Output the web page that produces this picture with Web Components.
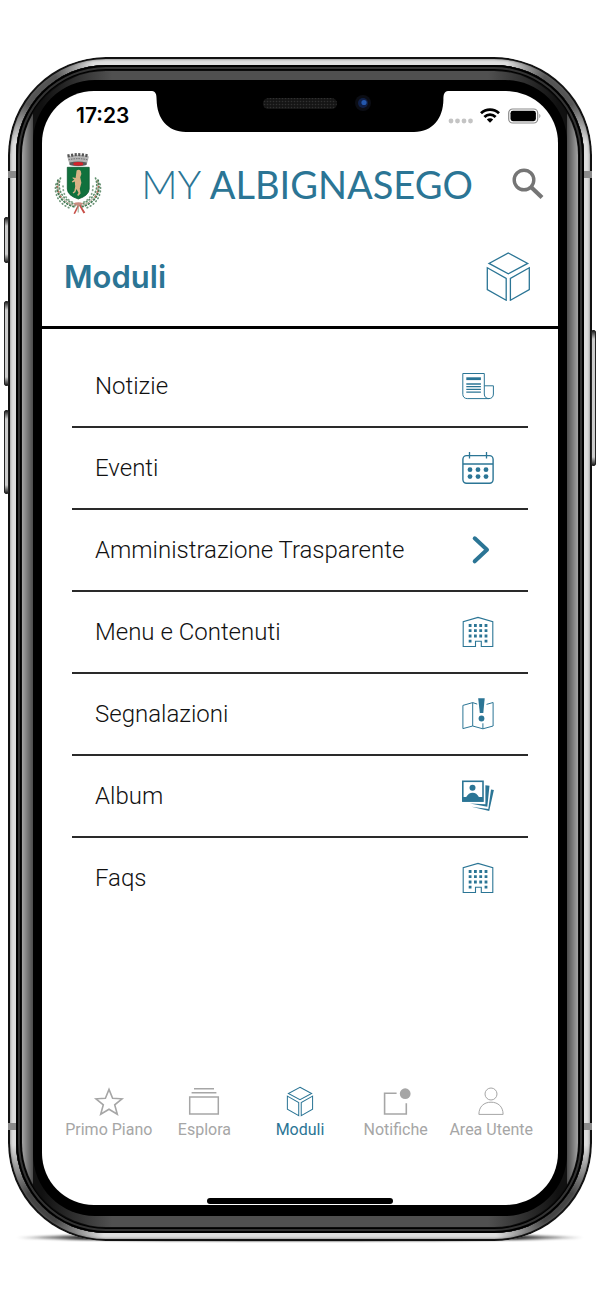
<!DOCTYPE html>
<html lang="it">
<head>
    <meta charset="utf-8">
    <meta name="viewport" content="width=device-width, initial-scale=1">
    <title>My Albignasego</title>
    <style>
        body {
            margin: 0;
            background: #fff;
            color: #111;
            font-family: Roboto, "Noto Sans", sans-serif;
            --brand: #2b7595;
            --muted: #a6a6a6;
        }
    </style>
</head>
<body>
    <phone-frame>
        <status-bar slot="status" time="17:23"></status-bar>
        <app-header></app-header>
        <page-title icon="cube">Moduli</page-title>
        <module-list>
            <module-item icon="news">Notizie</module-item>
            <module-item icon="calendar">Eventi</module-item>
            <module-item icon="chevron">Amministrazione Trasparente</module-item>
            <module-item icon="building">Menu e Contenuti</module-item>
            <module-item icon="map">Segnalazioni</module-item>
            <module-item icon="album">Album</module-item>
            <module-item icon="building">Faqs</module-item>
        </module-list>
        <tab-bar>
            <tab-item icon="star">Primo Piano</tab-item>
            <tab-item icon="stack">Esplora</tab-item>
            <tab-item icon="smallcube" active>Moduli</tab-item>
            <tab-item icon="notify">Notifiche</tab-item>
            <tab-item icon="user">Area Utente</tab-item>
        </tab-bar>
    </phone-frame>

    <script>
        const CUBE = `
            <path d="M22.3 1 41.7 11.4 22.3 21.8 3 11.4z"/>
            <path d="M1.3 15.8 20.2 26.5V48.2L1.3 37.5z"/>
            <path d="M43.3 15.8 24.4 26.5V48.2L43.3 37.5z"/>`;

        const ICONS = {
            cube: { box: "0 0 44 49", body: `<g stroke-width="1.3">${CUBE}</g>` },
            smallcube: { box: "0 0 32 32", body: `<g transform="translate(2.6 .7) scale(.6)" stroke-width="1.7">${CUBE}</g>` },
            news: {
                box: "0 0 32 32",
                body: `
                    <path d="M27 28.6H5.2C2.6 28.6.8 26.8.8 24.3V3.5h21.5V24c0 3 2 4.6 4.6 4.6s4.5-1.6 4.5-4.6v-8.2h-9.1"/>
                    <path d="M4.3 8.7h14.6" stroke-width="2.8"/>
                    <path d="M4.3 14h14.6M4.3 16.7h14.6M4.3 19.4h14.6M4.3 22.2h14.6" stroke-width="1.3"/>`
            },
            calendar: {
                box: "0 0 32 32",
                body: `
                    <rect x=".9" y="3.6" width="30.2" height="27.6" rx="3.6" stroke-width="1.4"/>
                    <path d="M1 12h30M7.5 0v6.5M24.5 0v6.5" stroke-width="1.3"/>
                    <g fill="currentColor" stroke="none">
                        <circle cx="8" cy="17.7" r="2.4"/><circle cx="16" cy="17.7" r="2.4"/><circle cx="24" cy="17.7" r="2.4"/>
                        <circle cx="8" cy="24.6" r="2.4"/><circle cx="16" cy="24.6" r="2.4"/><circle cx="24" cy="24.6" r="2.4"/>
                    </g>`
            },
            chevron: {
                box: "0 0 32 32",
                body: `<path d="M12.7 4.3 25 15.8 12.7 27.3" stroke-width="4" stroke-linecap="round" stroke-linejoin="round"/>`
            },
            building: {
                box: "0 0 32 32",
                body: `
                    <path d="M1.2 30.5V5.6L16 1.4l14.8 4.2v24.9H19.3v-5.2h-5.8v5.2z" stroke-width="1.1"/>
                    <path d="M6.7 9.5h19M6.7 14.6h19M6.7 20h19" stroke-width="2.8" stroke-dasharray="2.8 2.5"/>
                    <path d="M6.7 25.2h2.8M22.6 25.2h2.8" stroke-width="2.8"/>`
            },
            map: {
                box: "0 0 32 32",
                body: `
                    <path d="M15.2 6.1 10.7 4.6.9 7.4v23.2L10.7 28l10.2 2.8 10.2-2.8V4.5l-6.6 1.9M10.7 4.6V28M20.9 30.8v-5.5"/>
                    <path d="M16.2.2h6.5L21.3 15h-3.5z" fill="currentColor" stroke="none"/>
                    <circle cx="19.5" cy="20.5" r="2.9" fill="currentColor" stroke="none"/>`
            },
            album: {
                box: "0 0 32 32",
                body: `
                    <rect x=".8" y="1.3" width="20.2" height="19.8" stroke-width="1.6"/>
                    <g fill="currentColor" stroke="none">
                        <circle cx="10.5" cy="7.8" r="3"/>
                        <path d="M1 21.5V17h3.2c1.6-2.8 3.7-4.3 6.4-4.3s4.8 1.5 6.3 4.3H21v4.5z"/>
                        <path d="M23.4 5.3 27.5 5.7 25.3 26.8 8 23.5 23.4 24.2z"/>
                        <path d="M29 9.5 31.9 10.1 27.2 31 9.5 26.8 26.3 29z"/>
                    </g>`
            },
            star: {
                box: "0 0 32 32",
                body: `<path d="M16 3.4 19.6 12.2 29 12.8 21.7 18.8 24.3 28.2 16 23.2 7.7 28.2 10.3 18.8 3 12.8 12.4 12.2z" stroke-width="1.6"/>`
            },
            stack: {
                box: "0 0 32 32",
                body: `
                    <path d="M6 2.8h20M3.6 6.8h24.8" stroke-width="1.5"/>
                    <rect x="1.7" y="11" width="28.6" height="17" stroke-width="1.5"/>`
            },
            notify: {
                box: "0 0 32 32",
                body: `
                    <path d="M16.6 7.3H4.6V28h21.7V17.3" stroke-width="1.6"/>
                    <circle cx="25.2" cy="7.7" r="5.4" fill="currentColor" stroke="none"/>`
            },
            user: {
                box: "0 0 32 32",
                body: `
                    <circle cx="16" cy="8" r="6"/>
                    <path d="M3.9 28.4c0-7.8 5-12.2 12.1-12.2s12.1 4.4 12.1 12.2z"/>`
            },
            search: {
                box: "0 0 32 32",
                body: `
                    <circle cx="12" cy="12" r="9.8" stroke-width="3.4"/>
                    <path d="M19 19l11 10.5" stroke-width="4.2"/>`
            }
        };

        class AppIcon extends HTMLElement {
            constructor() {
                super();
                this.attachShadow({ mode: "open" });
            }

            connectedCallback() {
                const icon = ICONS[this.getAttribute("name")];

                this.shadowRoot.innerHTML = `
                    <style>
                        :host {
                            display: block;
                            flex: none;
                            width: 32px;
                            height: 32px;
                        }

                        svg {
                            display: block;
                            width: 100%;
                            height: 100%;
                        }
                    </style>
                    <svg viewBox="${icon.box}" fill="none" stroke="currentColor" aria-hidden="true">${icon.body}</svg>
                `;
            }
        }
        customElements.define("app-icon", AppIcon);

        class PhoneFrame extends HTMLElement {
            constructor() {
                super();
                this.attachShadow({ mode: "open" });

                this.shadowRoot.innerHTML = `
                    <style>
                        :host {
                            box-sizing: border-box;
                            display: flex;
                            min-height: 100vh;
                            padding: 57px 8px 59px;
                        }

                        .steel, .rim, .glass, .bezel, .screen {
                            box-sizing: border-box;
                            display: flex;
                            flex-direction: column;
                            flex: 1;
                            min-width: 0;
                        }

                        .steel {
                            position: relative;
                            padding: 8px;
                            border-radius: 98px;
                            background:
                                radial-gradient(circle at 30px 30px, #555 20px, transparent 60px),
                                radial-gradient(circle at calc(100% - 30px) 30px, #555 20px, transparent 60px),
                                radial-gradient(circle at 30px calc(100% - 30px), #444 20px, transparent 70px),
                                radial-gradient(circle at calc(100% - 30px) calc(100% - 30px), #444 20px, transparent 70px),
                                #dedede;
                            box-shadow: inset 0 0 0 2px #111, inset 0 0 3px 2px #666;
                        }

                        .steel::before {
                            content: "";
                            position: absolute;
                            z-index: -1;
                            right: 8px;
                            bottom: 0;
                            left: 8px;
                            height: 7px;
                            border-radius: 50%;
                            background: linear-gradient(90deg, transparent, #222 12%, #222 88%, transparent);
                            filter: blur(1px);
                        }

                        .rim {
                            padding: 6px;
                            border-radius: 90px;
                            background: #0c0c0c;
                            box-shadow: inset 0 0 0 2px #000, inset 0 0 0 4px #333, inset 0 0 0 5px #000;
                        }

                        .glass {
                            padding: 9px 11px 11px;
                            border-radius: 84px;
                            background:
                                linear-gradient(90deg, #a4a4a4, #4c4c4c 11px, transparent 11px, transparent calc(100% - 11px), #4c4c4c calc(100% - 11px), #a4a4a4),
                                linear-gradient(90deg, #111 20px, #505050 90px, #505050 calc(100% - 90px), #111 calc(100% - 20px));
                        }

                        .bezel {
                            padding: 11px 9px;
                            border-radius: 62px;
                            background: #000;
                        }

                        .screen {
                            position: relative;
                            overflow: hidden;
                            border-radius: 52px;
                            background: #fff;
                        }

                        .notch {
                            position: absolute;
                            top: 0;
                            left: 50%;
                            width: 296px;
                            height: 41px;
                            transform: translateX(-50%);
                        }

                        .home {
                            flex: none;
                            width: 36%;
                            height: 6px;
                            margin: 0 auto 1px;
                            border-radius: 3px;
                            background: #000;
                        }

                        .key {
                            position: absolute;
                            width: 5px;
                            border: 1px solid #222;
                            box-sizing: border-box;
                            border-radius: 2px;
                            background: linear-gradient(#222, #ccc 8px, #ccc calc(100% - 8px), #222);
                        }

                        .key--mute { top: 160px; left: -4px; height: 46px; }
                        .key--up { top: 244px; left: -4px; height: 85px; }
                        .key--down { top: 353px; left: -4px; height: 84px; }
                        .key--power { top: 273px; right: -4px; height: 136px; }

                        .band {
                            position: absolute;
                            width: 8px;
                            height: 7px;
                            background: #8a8a8a;
                        }

                        .band--tl { top: 114px; left: 0; }
                        .band--tr { top: 114px; right: 0; }
                        .band--bl { bottom: 111px; left: 0; }
                        .band--br { bottom: 111px; right: 0; }
                    </style>

                    <div class="steel">
                        <span class="key key--mute"></span>
                        <span class="key key--up"></span>
                        <span class="key key--down"></span>
                        <span class="key key--power"></span>
                        <span class="band band--tl"></span>
                        <span class="band band--tr"></span>
                        <span class="band band--bl"></span>
                        <span class="band band--br"></span>
                        <div class="rim">
                            <div class="glass">
                                <div class="bezel">
                                    <div class="screen">
                                        <slot name="status"></slot>
                                        <slot></slot>
                                        <div class="home"></div>
                                        <svg class="notch" viewBox="0 0 296 41" aria-hidden="true">
                                            <defs>
                                                <pattern id="mesh" width="3" height="3" patternUnits="userSpaceOnUse">
                                                    <rect width="3" height="3" fill="#151515"/>
                                                    <circle cx="1.5" cy="1.5" r=".8" fill="#303030"/>
                                                </pattern>
                                            </defs>
                                            <path d="M0 0C3.6.4 4.6 3 4.6 9 5 27 15 41 34 41H262C281 41 291 27 291.4 9 291.4 3 292.4.4 296 0z"/>
                                            <rect x="111" y="7" width="74" height="11" rx="5.5" fill="url(#mesh)"/>
                                            <circle cx="211" cy="12" r="8" fill="#0b0d14"/>
                                            <circle cx="211" cy="12" r="5" fill="#102048"/>
                                            <circle cx="212" cy="11.5" r="2.6" fill="#2458ae"/>
                                        </svg>
                                    </div>
                                </div>
                            </div>
                        </div>
                    </div>
                `;
            }
        }
        customElements.define("phone-frame", PhoneFrame);

        class StatusBar extends HTMLElement {
            constructor() {
                super();
                this.attachShadow({ mode: "open" });
            }

            connectedCallback() {
                this.shadowRoot.innerHTML = `
                    <style>
                        :host {
                            display: flex;
                            align-items: center;
                            justify-content: space-between;
                            height: 50px;
                            padding: 0 16px 0 34px;
                            color: #000;
                            font: 600 21px/24px Inter, sans-serif;
                        }

                        svg {
                            display: block;
                        }
                    </style>
                    <time>${this.getAttribute("time")}</time>
                    <svg width="94" height="18" viewBox="0 0 94 18" role="img" aria-label="Wi-Fi, batteria carica">
                        <g fill="#c4c4c4">
                            <circle cx="3" cy="14" r="2.4"/><circle cx="9.5" cy="14" r="2.4"/>
                            <circle cx="16" cy="14" r="2.4"/><circle cx="22.5" cy="14" r="2.4"/>
                        </g>
                        <g fill="none" stroke="#000" stroke-width="2.8">
                            <path d="M33 6.3a13 13 0 0 1 18 0"/>
                            <path d="M36.4 10a8 8 0 0 1 11.2 0"/>
                        </g>
                        <path d="M42 15.8l-3.2-3.3a4.6 4.6 0 0 1 6.4 0z"/>
                        <rect x="60.7" y="2" width="29" height="14" rx="4" fill="none" stroke="#8a8a8a" stroke-width="1.2"/>
                        <rect x="62.5" y="3.8" width="25.4" height="10.4" rx="2.4"/>
                        <path d="M91.4 6.8q2 2.2 0 4.4z" fill="#8a8a8a"/>
                    </svg>
                `;
            }
        }
        customElements.define("status-bar", StatusBar);

        class TownCrest extends HTMLElement {
            constructor() {
                super();
                this.attachShadow({ mode: "open" });

                this.shadowRoot.innerHTML = `
                    <style>
                        :host {
                            display: block;
                            flex: none;
                            width: 48px;
                            height: 62px;
                        }

                        svg {
                            display: block;
                        }
                    </style>
                    <svg width="48" height="62" viewBox="0 0 48 62" role="img" aria-label="Stemma">
                        <path d="M13.3 3.5Q24 0 35 3.5L32.6 12Q24 14.5 15.6 12z" fill="#b5b5b5"/>
                        <path d="M13.5 3Q24 .2 34.800 3" fill="none" stroke="#555" stroke-width="3" stroke-dasharray="2.2 1.4"/>
                        <path d="M14.5 6.8Q24 4.5 33.8 6.8" fill="none" stroke="#666" stroke-dasharray="1.5 1"/>
                        <path d="M15.6 9.5Q24 7.5 32.8 9.5L32.4 12Q24 14 15.8 12z" fill="#5b5b5b"/>
                        <path d="M19.5 9.8Q24 8.4 29 9.8V12Q24 13 19.5 12z" fill="#d3222a"/>
                        <g fill="none" stroke-linecap="round" stroke-width="1.7">
                            <path d="M6.5 25C2 38 10 48 23 52M41.500 25C46 38 38 48 25 52" stroke="#5e8f6b" stroke-dasharray=".8 2.6"/>
                            <path d="M4 27C0 40 8 51 21 54M44 27C48 40 40 51 27 54" stroke="#3f7a52" stroke-dasharray="1 2.4"/>
                            <path d="M2 31C-.5 42 6 52 17 55.500M46 31C48.500 42 42 52 31 55.500" stroke="#6d9578" stroke-dasharray=".6 3"/>
                            <path d="M9 33C9 42 13 47 20 50M39 33C39 42 35 47 28 50" stroke="#86a58c" stroke-dasharray=".6 3.2"/>
                        </g>
                        <g fill="none">
                            <path d="M5 27C1 39 9 50 22 53M43 27C47 39 39 50 26 53" stroke="#83765c" stroke-width=".8"/>
                            <path d="M3.500 33q0 8 6 14M44.500 33q0 8-6 14" stroke="#c0604f" stroke-width="1.4" stroke-dasharray="1.3 4"/>
                        </g>
                        <path d="M13.3 14.3H35.2V36Q35 42.5 24.3 46 13.5 42.5 13.3 36z" fill="#11713d" stroke="#0b5930" stroke-width=".8"/>
                        <path d="M22.6 17.500q2.400-1.500 4.200.5l.6 3-1.200 3.300 1.200 5.400-1.600 6 .8 4.700-2.400 2.600-1-.9 1.300-2.300-2-3.700-1.200 3.200-2.200 1.200-.4-1.100 1.600-1.400.9-4.500-.4-5-2.300 1-.7-1 2.600-2-1.700-1-.1-1.300 3 .8z" fill="#d8b286"/>
                        <path d="M19 50.500q5.300-2.500 10.500 0l-5 2.700z" fill="#c98a7f"/>
                        <path d="M23.5 52.500l-4 8 1.500.5 4-8M25 52.500l4.500 8 1.800-1-4.800-7.500" fill="#c84f48"/>
                        <path d="M24.2 52.500v7" stroke="#8fae97" stroke-width="1"/>
                    </svg>
                `;
            }
        }
        customElements.define("town-crest", TownCrest);

        class AppHeader extends HTMLElement {
            constructor() {
                super();
                this.attachShadow({ mode: "open" });

                this.shadowRoot.innerHTML = `
                    <style>
                        :host {
                            display: block;
                        }

                        header {
                            display: flex;
                            align-items: center;
                            justify-content: space-between;
                            height: 86px;
                            padding: 0 14px 0 12px;
                        }

                        .logo {
                            color: var(--brand);
                            font: 400 38px/44px Lato, sans-serif;
                            text-decoration: none;
                            white-space: nowrap;
                        }

                        .logo__my {
                            font-size: 40px;
                            font-weight: 300;
                        }

                        button {
                            padding: 0;
                            border: 0;
                            background: none;
                            color: #757575;
                        }
                    </style>
                    <header>
                        <town-crest></town-crest>
                        <a class="logo" href="#home"><span class="logo__my">MY</span> ALBIGNASEGO</a>
                        <button type="button" aria-label="Cerca"><app-icon name="search"></app-icon></button>
                    </header>
                `;
            }
        }
        customElements.define("app-header", AppHeader);

        class PageTitle extends HTMLElement {
            constructor() {
                super();
                this.attachShadow({ mode: "open" });
            }

            connectedCallback() {
                this.shadowRoot.innerHTML = `
                    <style>
                        :host {
                            display: flex;
                            align-items: center;
                            justify-content: space-between;
                            height: 99px;
                            padding: 0 28px 0 22px;
                            border-bottom: 3px solid #000;
                            color: var(--brand);
                        }

                        h1 {
                            margin: 0;
                            font: 600 31px/40px Inter, sans-serif;
                        }

                        app-icon {
                            width: 44px;
                            height: 49px;
                        }
                    </style>
                    <h1><slot></slot></h1>
                    <app-icon name="${this.getAttribute("icon")}"></app-icon>
                `;
            }
        }
        customElements.define("page-title", PageTitle);

        class ModuleList extends HTMLElement {
            constructor() {
                super();
                this.attachShadow({ mode: "open" });

                this.shadowRoot.innerHTML = `
                    <style>
                        :host {
                            display: block;
                            padding: 17px 30px 0;
                        }

                        ::slotted(:not(:last-child)) {
                            border-bottom: 2px solid #2a2a2a;
                        }
                    </style>
                    <nav aria-label="Moduli"><slot></slot></nav>
                `;
            }
        }
        customElements.define("module-list", ModuleList);

        class ModuleItem extends HTMLElement {
            constructor() {
                super();
                this.attachShadow({ mode: "open" });
            }

            connectedCallback() {
                this.shadowRoot.innerHTML = `
                    <style>
                        :host {
                            display: block;
                        }

                        a {
                            display: flex;
                            align-items: center;
                            justify-content: space-between;
                            min-height: 80px;
                            padding: 0 34px 0 23px;
                            color: inherit;
                            font-size: 24px;
                            font-weight: 300;
                            line-height: 32px;
                            text-decoration: none;
                        }

                        app-icon {
                            color: var(--brand);
                        }
                    </style>
                    <a href="#${this.getAttribute("icon")}">
                        <slot></slot>
                        <app-icon name="${this.getAttribute("icon")}"></app-icon>
                    </a>
                `;
            }
        }
        customElements.define("module-item", ModuleItem);

        class TabBar extends HTMLElement {
            constructor() {
                super();
                this.attachShadow({ mode: "open" });

                this.shadowRoot.innerHTML = `
                    <style>
                        :host {
                            display: block;
                            margin-top: auto;
                            padding: 0 19px 58px;
                        }

                        nav {
                            display: grid;
                            grid-template-columns: repeat(5, 1fr);
                        }
                    </style>
                    <nav aria-label="Navigazione"><slot></slot></nav>
                `;
            }
        }
        customElements.define("tab-bar", TabBar);

        class TabItem extends HTMLElement {
            constructor() {
                super();
                this.attachShadow({ mode: "open" });
            }

            connectedCallback() {
                this.shadowRoot.innerHTML = `
                    <style>
                        :host {
                            display: block;
                            color: var(--muted);
                        }

                        :host([active]) {
                            color: var(--brand);
                        }

                        a {
                            display: flex;
                            flex-direction: column;
                            align-items: center;
                            gap: 2px;
                            color: inherit;
                            font-size: 16px;
                            line-height: 20px;
                            text-decoration: none;
                            white-space: nowrap;
                        }
                    </style>
                    <a href="#${this.getAttribute("icon")}">
                        <app-icon name="${this.getAttribute("icon")}"></app-icon>
                        <span><slot></slot></span>
                    </a>
                `;
            }
        }
        customElements.define("tab-item", TabItem);
    </script>
</body>
</html>
